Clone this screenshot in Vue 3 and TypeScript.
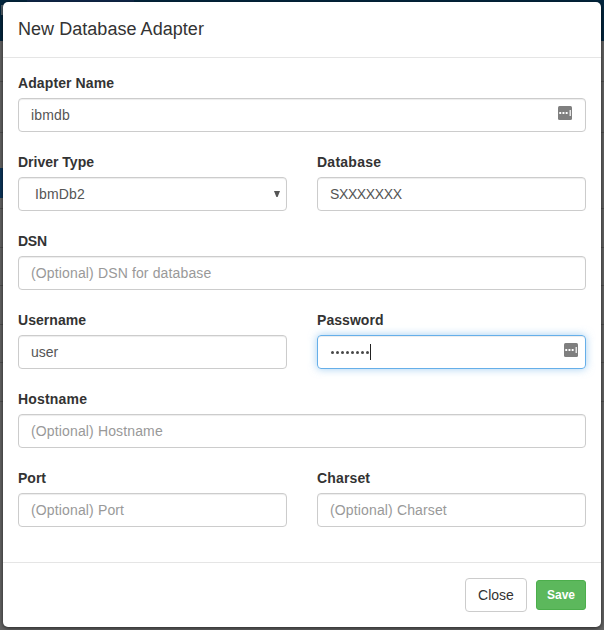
<script setup lang="ts">
import { reactive } from 'vue'

interface Field {
  key: string
  label: string
  placeholder?: string
  kind?: 'select' | 'password'
  half?: boolean
  keyIcon?: boolean
  labelWidth: number
}

const fields: Field[] = [
  { key: 'name', label: 'Adapter Name', keyIcon: true, labelWidth: 96 },
  { key: 'driver', label: 'Driver Type', kind: 'select', half: true, labelWidth: 76 },
  { key: 'database', label: 'Database', half: true, labelWidth: 64 },
  { key: 'dsn', label: 'DSN', placeholder: '(Optional) DSN for database', labelWidth: 29 },
  { key: 'username', label: 'Username', half: true, labelWidth: 68 },
  { key: 'password', label: 'Password', kind: 'password', half: true, keyIcon: true, labelWidth: 66.5 },
  { key: 'hostname', label: 'Hostname', placeholder: '(Optional) Hostname', labelWidth: 69 },
  { key: 'port', label: 'Port', placeholder: '(Optional) Port', half: true, labelWidth: 28 },
  { key: 'charset', label: 'Charset', placeholder: '(Optional) Charset', half: true, labelWidth: 53 },
]

const values = reactive<Record<string, string>>({
  name: 'ibmdb',
  driver: 'IbmDb2',
  database: 'SXXXXXXX',
  dsn: '',
  username: 'user',
  hostname: '',
  port: '',
  charset: '',
})
</script>

<template>
  <div class="page">
    <div class="nav"><i></i><b></b></div>
    <div class="rules"><i></i><i></i></div>
    <div class="backdrop"><i v-for="n in 6" :key="n"></i></div>
    <form class="modal" @submit.prevent>
      <header><h4>New Database Adapter</h4></header>
      <main>
        <div v-for="f in fields" :key="f.key" class="field" :class="{ half: f.half }">
          <label :for="f.key"><svg :width="f.labelWidth + 2" height="20"><text x="0" y="15" :textLength="f.labelWidth">{{ f.label }}</text></svg></label>
          <div class="control" :class="[f.key, { focused: f.kind === 'password' }]">
            <select v-if="f.kind === 'select'" :id="f.key" v-model="values[f.key]">
              <option>IbmDb2</option>
            </select>
            <div v-else-if="f.kind === 'password'" :id="f.key" class="dots">
              <span v-for="n in 8" :key="n"></span><b></b>
            </div>
            <input v-else :id="f.key" v-model="values[f.key]" :placeholder="f.placeholder" type="text" />
            <svg v-if="f.kind === 'select'" class="arrow" width="6" height="6" viewBox="0 0 6 6"><path d="M0 0H6L3.6 6H2.4Z" /></svg>
            <svg v-if="f.keyIcon" class="key" :class="{ edge: f.half }" width="14" height="14" viewBox="0 0 14 14">
              <rect width="14" height="14" rx="1.5" fill="#7f7f7f" />
              <path d="M1.3 6h1.9v2h-1.9zM4.5 6h1.9v2h-1.9zM7.7 6h1.9v2h-1.9zM11.6 4h1.2v6h-1.2z" fill="#fff" />
            </svg>
          </div>
        </div>
      </main>
      <footer>
        <button type="button" class="close">Close</button>
        <button type="submit" class="save">Save</button>
      </footer>
    </form>
  </div>
</template>

<style>
body { margin: 0; overflow: hidden; }
</style>

<style scoped>
* { box-sizing: border-box; }
.page { position: relative; width: 604px; height: 630px; padding: 2px 3px 3px; background: #646464; font: 14px/20px "Liberation Sans", Arial, sans-serif; color: #333; overflow: hidden; }
.nav { position: absolute; inset: 0 0 auto; height: 41px; background: #03263e; }
.nav i { display: block; width: 107px; height: 2px; margin-left: 27px; background: #10284b; }
.nav b { display: block; width: 2px; height: 10px; margin: 3px 0 0 1px; background: #52606a; }
.rules { position: absolute; inset: 81px 0 auto; }
.rules i { display: block; height: 1px; margin-bottom: 50px; background: #505050; }
.backdrop { position: absolute; inset: 168px 0 auto; }
.backdrop::before { content: ""; display: block; width: 3px; height: 30px; background: #0b355a; }
.backdrop i { display: block; height: 1px; margin-bottom: 37.5px; background: #505050; }
.backdrop i:first-of-type { margin-top: 10px; }
.modal { position: relative; width: 598px; height: 625px; background: #fff; border-radius: 5px; box-shadow: 0 1px 4px rgba(0, 0, 0, .65); }
header { height: 56px; padding: 15px; border-bottom: 1px solid #e5e5e5; }
h4 { margin: 0; font-size: 18px; line-height: 24px; font-weight: 400; letter-spacing: .04px; }
main { display: flex; flex-wrap: wrap; column-gap: 30px; padding: 15px 15px 0; height: 504px; align-content: flex-start; }
.field { width: 568px; height: 79px; }
.half { width: 269px; }
label { display: block; height: 25px; }
label svg { display: block; }
label text { font-size: 14px; font-weight: 700; fill: #333; }
.control { position: relative; height: 34px; border: 1px solid #ccc; border-radius: 4px; box-shadow: inset 0 1px 1px rgba(0, 0, 0, .075); }
.focused { border-color: #66afe9; box-shadow: inset 0 1px 1px rgba(0, 0, 0, .075), 0 0 8px rgba(102, 175, 233, .6); }
input, select { display: block; width: 100%; height: 32px; padding: 0 12px; border: 0; outline: 0; background: transparent; color: #555; font: 14px/20px "Liberation Sans", Arial, sans-serif; letter-spacing: .14px; }
.database input { letter-spacing: -.38px; }
.username input { letter-spacing: 0; }
select { appearance: none; padding-left: 16px; }
input::placeholder { color: #999; opacity: 1; }
.arrow { position: absolute; right: 6px; top: 13px; fill: #555; }
.key { position: absolute; right: 13px; top: 7px; }
.key.edge { right: 7px; }
.dots { display: flex; align-items: center; height: 32px; padding-left: 12.8px; gap: 1.6px; }
.dots span { width: 3.4px; height: 3.4px; margin-top: 1px; border-radius: 50%; background: #484848; }
.dots b { width: 1px; height: 16px; margin-left: -.8px; background: #222; }
footer { display: flex; align-items: center; justify-content: flex-end; gap: 9px; height: 65px; padding: 0 15px; border-top: 1px solid #e5e5e5; }
button { margin: 0; padding: 0; font-family: "Liberation Sans", Arial, sans-serif; }
.close { width: 62px; height: 34px; border: 1px solid #ccc; border-radius: 4px; background: #fff; color: #333; font-size: 14px; }
.save { width: 50px; height: 30px; border: 1px solid #4cae4c; border-radius: 3px; background: #5cb85c; color: #fff; font-size: 12px; font-weight: 700; }
</style>
